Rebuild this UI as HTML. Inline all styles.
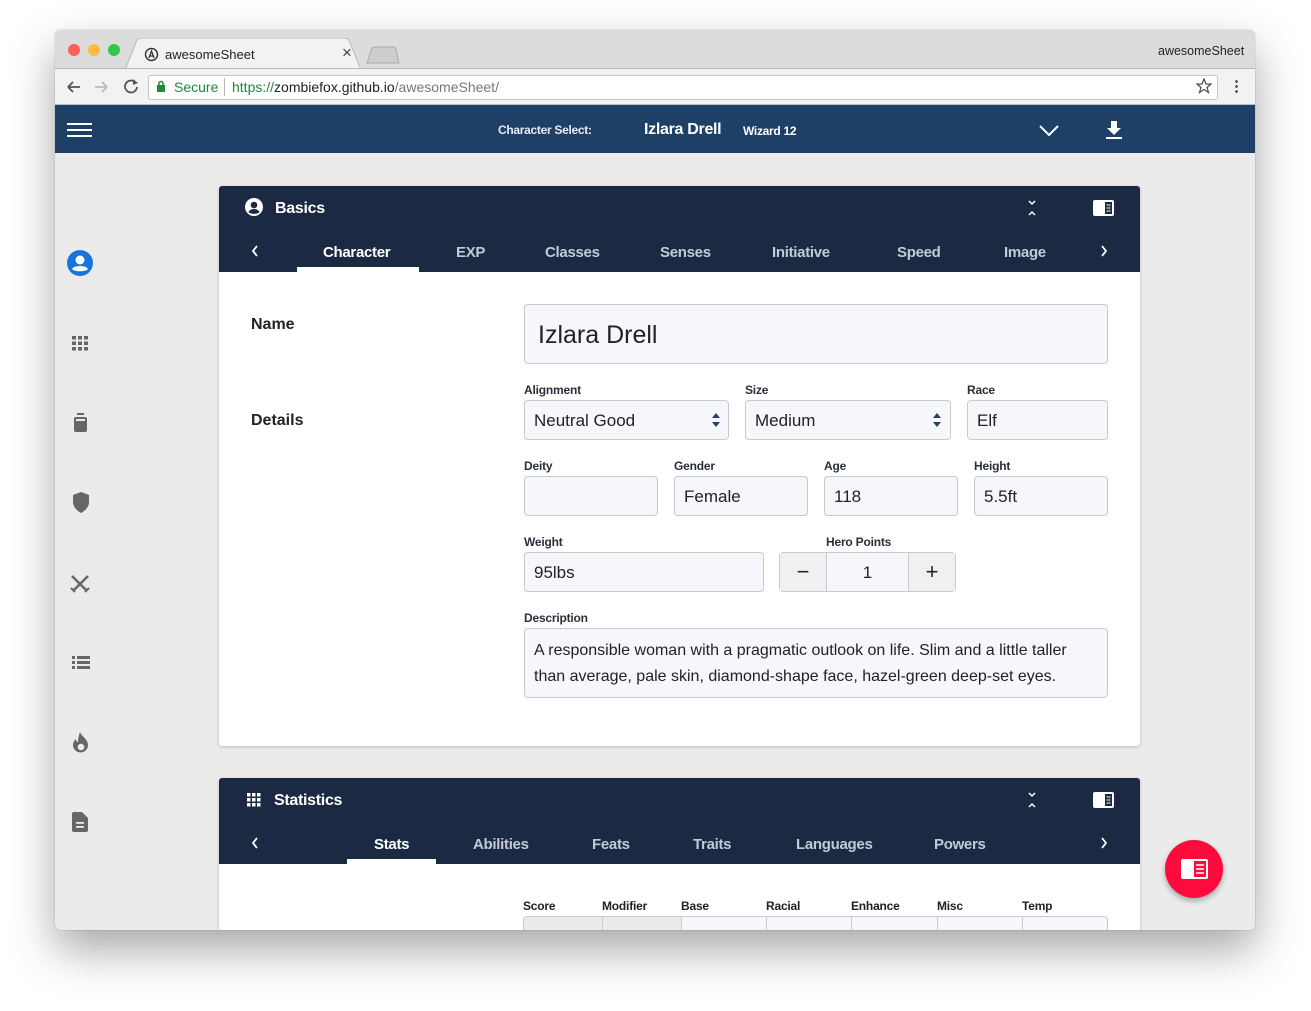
<!DOCTYPE html>
<html><head><style>
*{box-sizing:border-box;margin:0;padding:0}
body{width:1311px;height:1011px;background:#fff;position:relative;overflow:hidden;font-family:"Liberation Sans",sans-serif}
.a{position:absolute}
.win{left:55px;top:30px;width:1200px;height:900px;border-radius:5px;overflow:hidden;box-shadow:0 20px 45px rgba(0,0,0,.35),0 0 1px rgba(0,0,0,.4);background:#ebebeb}
.tabtxt{font-size:13px;color:#222}
.hd{background:#1b2a42;color:#fff}
.tab{font-size:15px;font-weight:bold;color:#c3cad6;top:58px;letter-spacing:-.3px}
.lbl{font-size:12px;color:#2a2f3a;font-weight:bold;letter-spacing:-.2px}
.in{border:1px solid #c9c9d0;border-radius:4px;background:#f6f7fb;font-size:17px;color:#222;padding-left:9px;display:flex;align-items:center}
</style></head><body>
<div class="a win">
 <div class="a" style="left:0;top:0;width:1200px;height:38px;background:#dcdcdc"></div>
 <div class="a" style="left:13px;top:14px;width:12px;height:12px;border-radius:50%;background:#fc605b"></div>
 <div class="a" style="left:33px;top:14px;width:12px;height:12px;border-radius:50%;background:#fdbc40"></div>
 <div class="a" style="left:53px;top:14px;width:12px;height:12px;border-radius:50%;background:#34c84a"></div>
 <svg class="a" style="left:70px;top:8px" width="250" height="32"><path d="M0 32 L12 2 Q14 0 18 0 L218 0 Q222 0 224 2 L236 32Z" fill="#f2f2f2" stroke="#b8b8b8"/></svg>
 <svg class="a" style="left:310px;top:16px" width="36" height="18"><path d="M2 17 L7 2 Q8 1 10 1 L28 1 Q30 1 31 3 L34 17Z" fill="#cdcdcd" stroke="#aaa"/></svg>
 <svg class="a" style="left:89px;top:17px" width="15" height="15"><circle cx="7.5" cy="7.5" r="6" fill="none" stroke="#333" stroke-width="1.4"/><path d="M5 11 L7.5 4 L10 11 M6 9h3" stroke="#333" stroke-width="1.3" fill="none"/></svg>
 <div class="a tabtxt" style="left:110px;top:17px">awesomeSheet</div>
 <div class="a" style="left:287px;top:13px;font-size:17px;color:#444">×</div>
 <div class="a tabtxt" style="left:1103px;top:14px;font-size:12.5px">awesomeSheet</div>
 <div class="a" style="left:0;top:38px;width:1200px;height:37px;background:#f2f2f2;border-top:1px solid #b8b8b8;border-bottom:1px solid #bdbdbd"></div>
 <svg class="a" style="left:10px;top:48px" width="80" height="18"><path d="M3 9h12M3 9l5-5M3 9l5 5" stroke="#555" stroke-width="1.8" fill="none"/><path d="M30 9h12M42 9l-5-5M42 9l-5 5" stroke="#bbb" stroke-width="1.8" fill="none"/><path d="M70 4a6 6 0 1 0 2 5" stroke="#555" stroke-width="1.8" fill="none"/><path d="M68 1l5 4-5 2z" fill="#555"/></svg>
 <div class="a" style="left:93px;top:45px;width:1070px;height:25px;background:#fff;border:1px solid #c5c5c5;border-radius:3px"></div>
 <svg class="a" style="left:101px;top:50px" width="10" height="13"><rect x="1" y="5" width="8" height="7" fill="#1e8a3a"/><path d="M3 6V3.5a2 2 0 0 1 4 0V6" stroke="#1e8a3a" stroke-width="1.5" fill="none"/></svg>
 <div class="a" style="left:119px;top:49px;font-size:14px;color:#1e8a3a">Secure</div>
 <div class="a" style="left:169px;top:48px;width:1px;height:18px;background:#bbb"></div>
 <div class="a" style="left:177px;top:49px;font-size:14px;color:#1e8a3a">https://<span style="color:#222">zombiefox.github.io</span><span style="color:#777">/awesomeSheet/</span></div>
 <svg class="a" style="left:1141px;top:48px" width="16" height="16"><path d="M8 1l2 5h5l-4 3.5 1.5 5L8 11.5 3.5 14.5 5 9.5 1 6h5z" fill="none" stroke="#555" stroke-width="1.3"/></svg>
 <div class="a" style="left:1180px;top:49px;width:3px;height:14px;background:radial-gradient(circle,#555 1.3px,transparent 1.5px) 0 0/3px 5px"></div>
 <div class="a" style="left:0;top:75px;width:1200px;height:48px;background:#1e3f66"></div>
 <div class="a" style="left:12px;top:93px;width:25px;height:2px;background:#fff;box-shadow:0 6px 0 #fff,0 12px 0 #fff"></div>
 <div class="a" style="left:443px;top:93px;font-size:12px;font-weight:bold;color:#e8ecf2;letter-spacing:-.3px">Character Select:</div>
 <div class="a" style="left:589px;top:91px;font-size:16px;font-weight:bold;color:#fff;letter-spacing:-.3px">Izlara Drell</div>
 <div class="a" style="left:688px;top:94px;font-size:12px;font-weight:bold;color:#fff;letter-spacing:-.3px">Wizard 12</div>
 <svg class="a" style="left:983px;top:94px" width="22" height="14"><path d="M2 2l9 9 9-9" stroke="#fff" stroke-width="2" fill="none"/></svg>
 <svg class="a" style="left:1051px;top:91px" width="16" height="18"><path d="M5 0h6v7h4l-7 7-7-7h4z" fill="#fff"/><rect x="0" y="16" width="16" height="2" fill="#fff"/></svg>
 <svg class="a" style="left:12px;top:220px" width="26" height="26"><circle cx="13" cy="13" r="13" fill="#1a73d9"/><circle cx="13" cy="10" r="4.5" fill="#fff"/><path d="M5 19c2-4 14-4 16 0c-2 3-14 3-16 0z" fill="#fff"/></svg>
 <svg class="a" style="left:17px;top:306px" width="17" height="15"><g fill="#666"><rect x="0" y="0" width="4" height="3.5"/><rect x="6" y="0" width="4" height="3.5"/><rect x="12" y="0" width="4" height="3.5"/><rect x="0" y="5.5" width="4" height="3.5"/><rect x="6" y="5.5" width="4" height="3.5"/><rect x="12" y="5.5" width="4" height="3.5"/><rect x="0" y="11" width="4" height="3.5"/><rect x="6" y="11" width="4" height="3.5"/><rect x="12" y="11" width="4" height="3.5"/></g></svg>
 <svg class="a" style="left:19px;top:383px" width="13" height="20"><rect x="3" y="0" width="7" height="2" fill="#666"/><rect x="0" y="4" width="13" height="15" rx="2" fill="#666"/><rect x="2" y="6" width="9" height="2" fill="#ebebeb"/></svg>
 <svg class="a" style="left:17px;top:462px" width="18" height="21"><path d="M9 0L17 3v7c0 5-4 9-8 11C5 19 1 15 1 10V3z" fill="#666"/></svg>
 <svg class="a" style="left:15px;top:544px" width="20" height="19"><path d="M2 2l15 15M18 2L3 17" stroke="#666" stroke-width="2.5"/><path d="M1 14l4 4M15 18l4-4" stroke="#666" stroke-width="2"/></svg>
 <svg class="a" style="left:17px;top:626px" width="18" height="13"><g fill="#666"><rect x="0" y="0" width="3" height="3"/><rect x="5" y="0" width="13" height="3"/><rect x="0" y="5" width="3" height="3"/><rect x="5" y="5" width="13" height="3"/><rect x="0" y="10" width="3" height="3"/><rect x="5" y="10" width="13" height="3"/></g></svg>
 <svg class="a" style="left:17px;top:702px" width="17" height="22"><path d="M8 0c1 4 8 7 8 13a7.5 7.5 0 0 1-15 0c0-3 2-5 3-6 0 2 1 3 2 3 0-4 1-7 2-10z" fill="#666"/><circle cx="9" cy="15" r="3.3" fill="#ebebeb"/></svg>
 <svg class="a" style="left:17px;top:782px" width="16" height="20"><path d="M0 2a2 2 0 0 1 2-2h8l6 6v12a2 2 0 0 1-2 2H2a2 2 0 0 1-2-2z" fill="#666"/><rect x="4" y="10" width="8" height="1.8" fill="#ebebeb"/><rect x="4" y="14" width="8" height="1.8" fill="#ebebeb"/></svg>

 <div class="a" style="left:164px;top:156px;width:921px;height:560px;background:#fff;border-radius:3px;box-shadow:0 1px 3px rgba(0,0,0,.2)"></div>
 <div class="a hd" style="left:164px;top:156px;width:921px;height:86px;border-radius:3px 3px 0 0">
  <svg class="a" style="left:26px;top:12px" width="18" height="18"><circle cx="9" cy="9" r="9" fill="#fff"/><circle cx="9" cy="7" r="3.3" fill="#1b2a42"/><path d="M3.5 14c2-4 9-4 11 0c-2 2.5-9 2.5-11 0z" fill="#1b2a42"/></svg>
  <div class="a" style="left:56px;top:14px;font-size:16px;font-weight:bold;letter-spacing:-.3px">Basics</div>
  <svg class="a" style="left:807px;top:13px" width="12" height="18"><path d="M3 2l3 3 3-3M3 16l3-3 3 3" stroke="#fff" stroke-width="1.5" fill="none"/></svg>
  <svg class="a" style="left:874px;top:14px" width="21" height="16"><rect x="0" y="0" width="21" height="16" rx="2" fill="#fff"/><rect x="12" y="2" width="7" height="12" fill="#1b2a42"/><path d="M13.5 5h4M13.5 8h4M13.5 11h4" stroke="#fff" stroke-width="1"/></svg>
  <svg class="a" style="left:32px;top:59px" width="8" height="12"><path d="M6 1L2 6l4 5" stroke="#fff" stroke-width="1.8" fill="none"/></svg>
  <div class="a tab" style="left:104px;color:#fff">Character</div>
  <div class="a tab" style="left:237px">EXP</div>
  <div class="a tab" style="left:326px">Classes</div>
  <div class="a tab" style="left:441px">Senses</div>
  <div class="a tab" style="left:553px">Initiative</div>
  <div class="a tab" style="left:678px">Speed</div>
  <div class="a tab" style="left:785px">Image</div>
  <svg class="a" style="left:881px;top:59px" width="8" height="12"><path d="M2 1l4 5-4 5" stroke="#fff" stroke-width="1.8" fill="none"/></svg>
  <div class="a" style="left:78px;top:81px;width:122px;height:5px;background:#fff"></div>
 </div>
 <div class="a" style="left:196px;top:286px;font-size:16px;font-weight:bold;color:#222">Name</div>
 <div class="a" style="left:196px;top:382px;font-size:16px;font-weight:bold;color:#222">Details</div>
 <div class="a in" style="left:469px;top:274px;width:584px;height:60px;font-size:25px;padding-left:13px;padding-top:2px">Izlara Drell</div>
 <div class="a lbl" style="left:469px;top:353px">Alignment</div>
 <div class="a lbl" style="left:690px;top:353px">Size</div>
 <div class="a lbl" style="left:912px;top:353px">Race</div>
 <div class="a in" style="left:469px;top:370px;width:205px;height:40px;padding-top:2px">Neutral Good</div>
 <div class="a in" style="left:690px;top:370px;width:206px;height:40px;padding-top:2px">Medium</div>
 <svg class="a" style="left:656px;top:382px" width="10" height="16"><path d="M1 6l4-5 4 5zM1 10l4 5 4-5z" fill="#2a3f5e"/></svg>
 <svg class="a" style="left:877px;top:382px" width="10" height="16"><path d="M1 6l4-5 4 5zM1 10l4 5 4-5z" fill="#2a3f5e"/></svg>
 <div class="a in" style="left:912px;top:370px;width:141px;height:40px;padding-top:2px">Elf</div>
 <div class="a lbl" style="left:469px;top:429px">Deity</div>
 <div class="a lbl" style="left:619px;top:429px">Gender</div>
 <div class="a lbl" style="left:769px;top:429px">Age</div>
 <div class="a lbl" style="left:919px;top:429px">Height</div>
 <div class="a in" style="left:469px;top:446px;width:134px;height:40px"></div>
 <div class="a in" style="left:619px;top:446px;width:134px;height:40px;padding-top:2px">Female</div>
 <div class="a in" style="left:769px;top:446px;width:134px;height:40px;padding-top:2px">118</div>
 <div class="a in" style="left:919px;top:446px;width:134px;height:40px;padding-top:2px">5.5ft</div>
 <div class="a lbl" style="left:469px;top:505px">Weight</div>
 <div class="a lbl" style="left:771px;top:505px">Hero Points</div>
 <div class="a in" style="left:469px;top:522px;width:240px;height:40px;padding-top:2px">95lbs</div>
 <div class="a" style="left:724px;top:522px;width:177px;height:40px;border:1px solid #c9c9d0;border-radius:4px;background:#f6f7fb;display:flex;font-size:17px;color:#222">
  <div style="width:47px;border-right:1px solid #c9c9d0;background:#f0f0f3;text-align:center;line-height:38px;font-size:22px">−</div>
  <div style="width:82px;border-right:1px solid #c9c9d0;text-align:center;line-height:40px">1</div>
  <div style="flex:1;background:#f0f0f3;text-align:center;line-height:38px;font-size:22px">+</div>
 </div>
 <div class="a lbl" style="left:469px;top:581px">Description</div>
 <div class="a in" style="left:469px;top:598px;width:584px;height:70px;font-size:16px;line-height:26px;align-items:flex-start;padding-top:9px;padding-right:30px">A responsible woman with a pragmatic outlook on life. Slim and a little taller than average, pale skin, diamond-shape face, hazel-green deep-set eyes.</div>

 <div class="a" style="left:164px;top:748px;width:921px;height:200px;background:#fff;border-radius:3px;box-shadow:0 1px 3px rgba(0,0,0,.2)"></div>
 <div class="a hd" style="left:164px;top:748px;width:921px;height:86px;border-radius:3px 3px 0 0">
  <svg class="a" style="left:28px;top:15px" width="14" height="14"><g fill="#fff"><rect x="0" y="0" width="3.5" height="3.5"/><rect x="5" y="0" width="3.5" height="3.5"/><rect x="10" y="0" width="3.5" height="3.5"/><rect x="0" y="5" width="3.5" height="3.5"/><rect x="5" y="5" width="3.5" height="3.5"/><rect x="10" y="5" width="3.5" height="3.5"/><rect x="0" y="10" width="3.5" height="3.5"/><rect x="5" y="10" width="3.5" height="3.5"/><rect x="10" y="10" width="3.5" height="3.5"/></g></svg>
  <div class="a" style="left:55px;top:14px;font-size:16px;font-weight:bold;letter-spacing:-.3px">Statistics</div>
  <svg class="a" style="left:807px;top:13px" width="12" height="18"><path d="M3 2l3 3 3-3M3 16l3-3 3 3" stroke="#fff" stroke-width="1.5" fill="none"/></svg>
  <svg class="a" style="left:874px;top:14px" width="21" height="16"><rect x="0" y="0" width="21" height="16" rx="2" fill="#fff"/><rect x="12" y="2" width="7" height="12" fill="#1b2a42"/><path d="M13.5 5h4M13.5 8h4M13.5 11h4" stroke="#fff" stroke-width="1"/></svg>
  <svg class="a" style="left:32px;top:59px" width="8" height="12"><path d="M6 1L2 6l4 5" stroke="#fff" stroke-width="1.8" fill="none"/></svg>
  <div class="a tab" style="left:155px;color:#fff">Stats</div>
  <div class="a tab" style="left:254px">Abilities</div>
  <div class="a tab" style="left:373px">Feats</div>
  <div class="a tab" style="left:474px">Traits</div>
  <div class="a tab" style="left:577px">Languages</div>
  <div class="a tab" style="left:715px">Powers</div>
  <svg class="a" style="left:881px;top:59px" width="8" height="12"><path d="M2 1l4 5-4 5" stroke="#fff" stroke-width="1.8" fill="none"/></svg>
  <div class="a" style="left:128px;top:81px;width:89px;height:5px;background:#fff"></div>
 </div>
 <div class="a lbl" style="left:468px;top:869px;color:#222">Score</div>
 <div class="a lbl" style="left:547px;top:869px;color:#222">Modifier</div>
 <div class="a lbl" style="left:626px;top:869px;color:#222">Base</div>
 <div class="a lbl" style="left:711px;top:869px;color:#222">Racial</div>
 <div class="a lbl" style="left:796px;top:869px;color:#222">Enhance</div>
 <div class="a lbl" style="left:882px;top:869px;color:#222">Misc</div>
 <div class="a lbl" style="left:967px;top:869px;color:#222">Temp</div>
 <div class="a" style="left:468px;top:886px;width:585px;height:30px;border:1px solid #c9c9d0;border-radius:4px;background:linear-gradient(90deg,#ebebeb 0,#ebebeb 158px,#f6f7fb 158px);"></div>
 <div class="a" style="left:547px;top:886px;width:1px;height:20px;background:#c9c9d0;box-shadow:79px 0 #c9c9d0,164px 0 #c9c9d0,249px 0 #c9c9d0,335px 0 #c9c9d0,420px 0 #c9c9d0"></div>

 <div class="a" style="left:1110px;top:810px;width:58px;height:58px;border-radius:50%;background:#ff0a3c;box-shadow:0 3px 6px rgba(0,0,0,.3)"></div>
 <svg class="a" style="left:1126px;top:829px" width="27" height="20"><rect x="0" y="0" width="27" height="20" rx="2" fill="#fff"/><rect x="13" y="2" width="12" height="16" fill="#ff0a3c"/><path d="M15 6h8M15 10h8M15 14h8" stroke="#fff" stroke-width="1.6"/></svg>
</div>
</body></html>
